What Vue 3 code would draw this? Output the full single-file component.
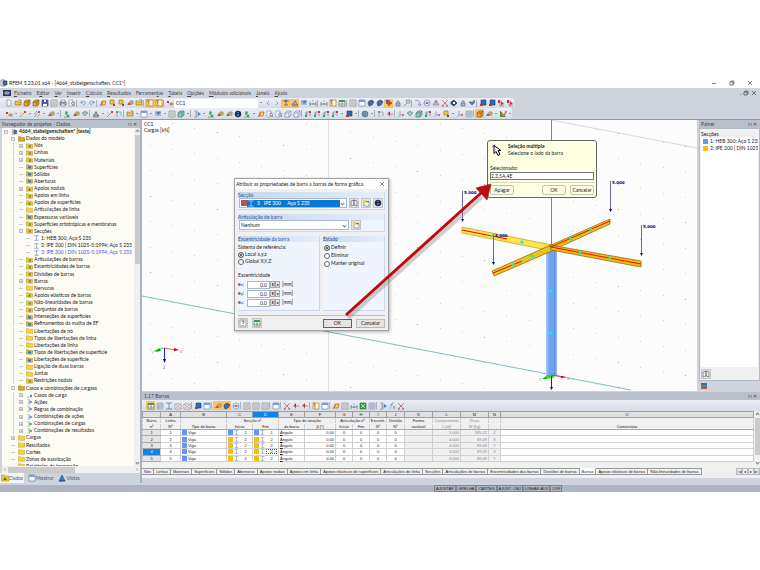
<script setup>
import { h, ref } from "vue";

const menu = [
  ["", "F", "icheiro"], ["E", "d", "itar"], ["", "V", "er"], ["", "I", "nserir"],
  ["", "C", "álculo"], ["", "R", "esultados"], ["Ferramen", "t", "as"], ["", "T", "abela"],
  ["", "O", "pções"], ["", "M", "ódulos adicionais"], ["", "J", "anela"], ["", "A", "juda"]
];

// every glyph is a list of [path, fill, stroke] on an 8x8 grid
const glyphs = {
  page: [["M2 1H5L6 2V7H2Z", "#fff", "#777"]],
  open: [["M1 2H3L4 3H7V6H1Z", "#f4c53c", "#8c6d1a"], ["M4 1H7V3", "none", "#555"]],
  cubeY: [["M1 3L3 1H7V5L5 7H1Z", "#eba52a", "#7b541c"], ["M1 3H5V7M5 3L7 1", "none", "#604622"]],
  cubeG: [["M1 3L3 1H7V5L5 7H1Z", "#8fcbb0", "#3b6b68"], ["M1 3H5V7M5 3L7 1", "none", "#45746a"]],
  wire: [["M1 3L3 1H7V5L5 7H1Z", "#eef3fb", "#6677aa"], ["M1 3H5V7M5 3L7 1", "none", "#6677aa"]],
  disk: [["M1 1H7V7H1Z", "#4861c0", "#26347c"], ["M3 1H5V3H3ZM2 5H6V7H2Z", "#fff", "none"]],
  sheet: [["M1 1H7V7H1Z", "#e8e8e8", "#777"], ["M2 3H6M2 5H6", "none", "#777"]],
  print: [["M1 3H7V6H1Z", "#aab2c2", "#555"], ["M2 1H6V3H2ZM2 5H6V7H2Z", "#fff", "#777"]],
  find: [["M1 1H5V7H1Z", "#fff", "#7b88a0"], ["M5 3A1.5 1.5 0 1 0 5 6A1.5 1.5 0 1 0 5 3M6 6L7 7", "#cfe0f8", "#3c568e"]],
  undo: [["M2 2V4H4M2 4C4 1 7 2 6 5L4 6", "none", "#5474b8"]],
  redo: [["M6 2V4H4M6 4C4 1 1 2 2 5L4 6", "none", "#5474b8"]],
  plane: [["M2 6L3 2H7L6 6Z", "#f5d864", "#b23d32"], ["M1 7L4 3", "none", "#c4302a"]],
  nodeY: [["M2 1H6V5H2Z", "#f2cf2c", "#8a6d1c"], ["M5 5H7V7H5Z", "#b2342b", "none"]],
  nodeR: [["M1 2H3V4H1Z", "#d22e25", "none"], ["M4 4H7V6H4Z", "#e6b82c", "#8c7744"]],
  line: [["M1 7L6 2", "none", "#4c9a3c"], ["M5 1H7V3H5Z", "#dc4036", "none"], ["M1 3H3", "none", "#e1b530"]],
  lines: [["M1 7L6 1M1 4L4 1M4 7L7 4", "none", "#59896a"], ["M5 1H7V3H5Z", "#dc5040", "none"]],
  beam: [["M1 2H7M4 2V6M2 6H6", "none", "#345295"], ["M3 1H5V3H3Z", "#4468a8", "none"]],
  support: [["M4 2L7 6H1Z", "#9daec8", "#425374"], ["M1 7H7M4 1V3", "none", "#c24436"]],
  supG: [["M3 1V5H6M1 7H7", "none", "#3b6b92"], ["M2 3L4 1L5 3L3 5ZM4 5H6V7H4Z", "#39a84b", "none"]],
  supR: [["M1 6L3 3L5 6Z", "#e04a3c", "none"], ["M4 2H7V5H4Z", "#f2c52e", "#546a94"]],
  axes: [["M3 1V5H7M3 5L1 7", "none", "#6580b6"], ["M5 4H7V6H5Z", "#de6c5f", "none"]],
  frame: [["M2 7V2H6V6", "none", "#738299"], ["M1 1H3V3H1Z", "#51a965", "none"]],
  frameR: [["M2 7V2H6V6M2 4H4", "none", "#456c9a"], ["M5 1H7V3H5Z", "#da342c", "none"], ["M1 5H3V7H1Z", "#28a743", "none"]],
  win: [["M1 1H7V7H1Z", "#fff", "#5e76a8"], ["M1 1H7V3H1Z", "#7c9bd4", "none"]],
  winY: [["M1 1H7V7H1Z", "#fff7da", "#977126"], ["M1 1H3V7", "#db9f3c", "#977126"]],
  grid: [["M1 1H7V7H1Z", "#e6ecf6", "#7f8dab"], ["M3 1V7M5 1V7M1 3H7M1 5H7", "none", "#7f8dab"]],
  gridG: [["M1 2H7V7H1Z", "#fff", "#48664e"], ["M1 1H7V3H1Z", "#3f9a55", "none"], ["M4 3V7M1 5H7", "none", "#48664e"]],
  gridR: [["M1 2H7V7H1Z", "#fff", "#777"], ["M2 3L6 6M6 3L2 6", "none", "#cf4b46"]],
  left: [["M5 2L3 4L5 6", "none", "#4a7ad0"]],
  right: [["M3 2L5 4L3 6", "none", "#4a7ad0"]],
  load: [["M1 2H7M2 2V6M4 2V6M6 2V6", "none", "#34559d"], ["M3 3L5 1L6 3L4 5Z", "#3e79c8", "none"]],
  blob: [["M2 2L5 1L7 3L5 6L2 7L1 4Z", "#416ba9", "#29417c"], ["M4 2L6 1L5 4Z", "#c53935", "none"]],
  star: [["M4 1L5 3L7 4L5 5L4 7L3 5L1 4L3 3Z", "#db382e", "#753d35"], ["M1 1H3V3H1Z", "#34589f", "none"]],
  measure: [["M1 5H7M1 3V7M7 3V7M4 4V6", "none", "#4c5b7a"], ["M3 1L5 3", "none", "#7390bf"]],
  lock: [["M2 4H6V7H2Z", "#a9b2c8", "#56637d"], ["M3 4V2H5V4", "none", "#56637d"]],
  wand: [["M1 7L4 4", "none", "#57617e"], ["M3 1H7V4H4Z", "#c8d3e8", "#65779b"]],
  turn: [["M1 2C4 0 6 3 6 6M4 5L6 7L7 5", "none", "#68728c"]],
  orbit: [["M4 1A3 3 0 1 0 4 7A3 3 0 1 0 4 1M1 4H7", "none", "#5987c6"], ["M3 3H5V5H3Z", "#d0625c", "none"]],
  gear: [["M4 1A3 3 0 1 0 4 7A3 3 0 1 0 4 1", "#8091ac", "#4d6080"], ["M3 3H5V5H3Z", "#4a9a88", "none"]],
  cone: [["M4 1L7 6H1Z", "#cfcbd4", "#77656c"], ["M4 2V5", "none", "#c7342c"]],
  cross: [["M1 1L7 7M7 1L1 7", "none", "#d02d2a"], ["M1 7H3M5 7H7", "none", "#333"]],
  eye: [["M1 3L4 1L7 4L4 7L1 5Z", "#31497e", "#1c2849"], ["M3 3H5V5H3Z", "#fff", "none"]],
  check: [["M1 3H7L4 6Z", "#587fc2", "#3a5c9a"], ["M5 1H7V3H5Z", "#78aa4c", "none"]],
  mark: [["M2 1H7V6H2Z", "#276cb2", "#174378"], ["M1 5H4V7H1Z", "#c62f33", "none"]],
  markR: [["M3 1V7H7", "none", "#a24545"], ["M4 2L7 5L4 6ZM1 1H3V4H1Z", "#c82936", "none"]],
  fan: [["M1 1L7 7H1Z", "#2aa348", "none"], ["M1 1L5 5L7 1L7 3L4 7Z", "#e6c722", "#c92d25"]],
  diamond: [["M1 3L4 1L7 3L4 6Z", "#72c9ae", "#5e88b4"], ["M3 3H5V5H3Z", "#f0bc38", "none"]],
  minusR: [["M1 4H7", "none", "#bd3d36"], ["M2 3L4 1V7Z", "#a93731", "none"]],
  fx: [["M2 7L4 1H6M2 3H5M5 4L7 7M7 4L5 7", "none", "#7081a4"]],
  excel: [["M1 1H7V7H1Z", "#37a348", "#186b2c"], ["M2 2L6 6M6 2L2 6", "none", "#fff"]],
  book: [["M1 2L4 1V6L1 7ZM4 1L7 2V7L4 6Z", "#eee", "#555"]],
  newWin: [["M2 3H7V7H2Z", "#fff", "#5d6f80"], ["M1 1H4V4H1Z", "#f5d22e", "none"], ["M4 2H7V3H4Z", "#39a452", "none"]],
  info: [["M4 1A3 3 0 1 0 4 7A3 3 0 1 0 4 1", "#123363", "#102040"], ["M4 2V3M4 4V6", "none", "#fff"]],
  help: [["M1 1H7V7H1Z", "#fff", "#777"], ["M3 3V2H5V4H4V5M4 6V7", "none", "#345"]],
  root: [["M1 1H5V7H1Z", "#fff", "#456"], ["M3 2H7V6H3Z", "#466ca8", "#234"]],
  logo: [["M0 1H8V7H0Z", "#24346c", "none"], ["M1 4H7M3 2V6M5 2V6", "none", "#fff"]],
  case: [["M1 7H4M6 3V6", "none", "#333"], ["M5 4H7V7H5Z", "#3269c4", "none"]],
  comb: [["M1 1H4V7H1M2 3H4M2 5H4", "none", "#777"], ["M5 2L8 4L5 6Z", "#3d80e0", "none"]],
  combG: [["M1 1H4V7H1M2 3H4M2 5H4", "none", "#777"], ["M5 2L8 4L5 6Z", "#2f9a44", "none"]],
  ibeam: [["M1 1H7M1 7H7M4 1V7", "none", "#38599b"]],
  ibeamW: [["M1 1H7M1 7H7M4 1V7", "none", "#fff"]],
  folder: [["M0 1H3L4 2H8V7H0Z", "#f7d53a", "#b9921c"]],
  folderX: [["M0 1H3L4 2H8V7H0Z", "#efc92e", "#a98618"], ["M3 3H6V6H3Z", "#8c8440", "none"]],
  folderB: [["M0 1H3L4 2H8V7H0Z", "#d9bb3a", "#8d8138"], ["M2 3H6V6H2Z", "#3f78b4", "none"]],
  folderG: [["M0 1H3L4 2H8V7H0Z", "#efc92e", "#a98618"], ["M4 3L6 6H2Z", "#21883c", "none"]],
  folderO: [["M0 1H3L4 2H8V7H0Z", "#d4af16", "#8a7110"]],
  views: [["M1 7L4 1L7 7Z", "#3b7bd0", "#27447c"], ["M1 7H7", "none", "#333"]],
  levels: [["M1 1H7V3H1Z", "#5464b0", "none"], ["M1 3H7V5H1Z", "#3e9d54", "none"], ["M1 5H7V7H1Z", "#cc4a4e", "none"]],
  close: [["M2 2L6 6M6 2L2 6", "none", "#333"]],
  restore: [["M2 3H5V6H2ZM3 3V2H6V5H5", "none", "#333"]],
  minimize: [["M2 4.5H6", "none", "#333"]]
};

const Ico = (props) =>
  h("svg", { class: "ico", viewBox: "0 0 8 8" }, glyphs[props.name].map((p) => h("path", { d: p[0], fill: p[1], stroke: p[2] })));
Ico.props = ["name"];

// "|" separator, "v" drop-down arrow, trailing * pressed
const ToolRow = (props) =>
  props.items.split(" ").map((t) => {
    if (t === "|") return h("i", { class: "sep" });
    if (t === "v") return h("i", { class: "drop" });
    const name = t.replace("*", "");
    return h("button", { type: "button", class: ["tool", { on: t !== name }], "aria-label": name }, [h(Ico, { name })]);
  });
ToolRow.props = ["items"];

const fileTools = "page open cubeY cubeY disk sheet print find | undo redo | plane nodeY nodeY supR open | winY* winY* | nodeR";
const viewTools = "v left right beam* support* load measure | measure winY gridG | sheet win blob blob star* lock wand | turn orbit cone cross eye lock check | mark mark markR markR";
const modelTools = "nodeR v line v lines v supR v | supG supR diamond | support v line frame | open v win v load v sheet cubeG v | comb v supG supR supR info supG v plane find find wire wire | frameR frameR frameR frameR v mark v | gear v | frame minusR | axes diamond cubeG frameR axes nodeY v axes grid | cubeY* supR v fan v";
const tableTools = "gridG* grid ibeam gridR gridR | mark win | supR* blob* orbit | sheet sheet sheet | win | cross minusR minusR | winY win | plane sheet measure excel grid | comb fx cross";

const tree = [
  [0, "root", "4664_stabeigenschaften* [teste]", "-"],
  [1, "folderO", "Dados do modelo", "-"],
  [2, "folderX", "Nós", "+"],
  [2, "folderX", "Linhas", "+"],
  [2, "folderX", "Materiais", "+"],
  [2, "folderB", "Superfícies"],
  [2, "folderB", "Sólidos"],
  [2, "folderB", "Aberturas"],
  [2, "folderG", "Apoios nodais", "+"],
  [2, "folderX", "Apoios em linha"],
  [2, "folderG", "Apoios de superfícies"],
  [2, "folder", "Articulações de linha"],
  [2, "folderB", "Espessuras variáveis"],
  [2, "folderX", "Superfícies ortotrópicas e membranas"],
  [2, "folderX", "Secções", "-"],
  [3, "ibeam", "1: HEB 300; Aço S 235"],
  [3, "ibeam", "2: IPE 200 | DIN 1025-5:1994; Aço S 235"],
  [3, "ibeam", "3: IPE 300 | DIN 1025-5:1994; Aço S 235"],
  [2, "folderX", "Articulações de barras"],
  [2, "folderX", "Excentricidades de barras"],
  [2, "folderX", "Divisões de barras"],
  [2, "folderX", "Barras", "+"],
  [2, "folder", "Nervuras"],
  [2, "folderG", "Apoios elásticos de barras"],
  [2, "folderX", "Não-linearidades de barras"],
  [2, "folderX", "Conjuntos de barras"],
  [2, "folderB", "Interseções de superfícies"],
  [2, "folderB", "Refinamentos da malha de EF"],
  [2, "folder", "Libertações de nó"],
  [2, "folder", "Tipos de libertações de linha"],
  [2, "folder", "Libertações de linha"],
  [2, "folderB", "Tipos de libertações de superfície"],
  [2, "folderB", "Libertações de superfície"],
  [2, "folder", "Ligação de duas barras"],
  [2, "folder", "Juntas"],
  [2, "folderX", "Restrições nodais"],
  [1, "folderO", "Casos e combinações de cargass", "-"],
  [2, "case", "Casos de carga", "+"],
  [2, "comb", "Ações", "+"],
  [2, "comb", "Regras de combinação", "+"],
  [2, "comb", "Combinações de ações", "+"],
  [2, "combG", "Combinações de cargas", "+"],
  [2, "combG", "Combinações de resultados", "+"],
  [1, "folder", "Cargas", "+"],
  [1, "folder", "Resultados"],
  [1, "folder", "Cortes"],
  [1, "folder", "Zonas de suavização"],
  [1, "folder", "Relatórios de impressão"]
];

// snap grid of the work plane
const dots = [];
for (let i = -18; i <= 6; i++) {
  for (let j = -12; j <= 12; j++) {
    const x = Math.round(551 + 22.3 * i);
    const y = Math.round(272 + 4.3 * i + 25.5 * j);
    if (i && y > 120 && y < 388) dots.push({ x, y, o: (i * i + j * j) % 3 ? 0.3 : 0.6 });
  }
}

const loads = [
  { x: 462, y: 190 }, { x: 493, y: 233 }, { x: 610, y: 180 }, { x: 641, y: 224 }
];
const marks = [
  [492, 235], [522, 241], [580, 252], [610, 257], [513, 264], [532, 255], [571, 238], [591, 229], [551, 290], [551, 332]
];

const reference = ref("local");
const state = ref("definir");
const selected = ref("2,3,5A,4E");
const offsets = ref([
  { axis: "x", value: "0.0" },
  { axis: "y", value: "0.0" },
  { axis: "z", value: "0.0" }
]);

const letters = ["A", "B", "C", "D", "E", "F", "G", "H", "I", "J", "K", "L", "M", "N", "O"];
const bars = [
  { n: 1, sec: 1, len: "5.000", weight: "585.22", dir: "Z" },
  { n: 2, sec: 2, len: "4.000", weight: "89.49", dir: "X" },
  { n: 3, sec: 2, len: "4.000", weight: "89.49", dir: "Y" },
  { n: 4, sec: 2, len: "4.000", weight: "89.49", dir: "X" },
  { n: 5, sec: 2, len: "4.000", weight: "89.49", dir: "Y" }
];
const sheets = [
  "Nós", "Linhas", "Materiais", "Superfícies", "Sólidos", "Aberturas", "Apoios nodais", "Apoios em linha",
  "Apoios elásticos de superfícies", "Articulações de linha", "Secções", "Articulações de barras",
  "Excentricidades das barras", "Divisões de barras", "Barras", "Apoios elásticos de barras", "Não-linearidades de barras"
];
const snaps = ["AJUSTAR", "GRELHA", "CARTES", "AJUST. OBJ", "LINHAS AUX", "DXF"];
</script>

<template>
  <div class="app">
    <header class="title">
      <Ico name="root" />
      <span>RFEM 5.23.01 x64 - [4664_stabeigenschaften, CC1*]</span>
      <div class="win-btns">
        <button type="button" aria-label="Minimizar"><Ico name="minimize" /></button>
        <button type="button" aria-label="Restaurar"><Ico name="restore" /></button>
        <button type="button" aria-label="Fechar"><Ico name="close" /></button>
      </div>
    </header>
    <nav class="menu">
      <Ico name="logo" />
      <a v-for="m in menu" :key="m[1] + m[2]" href="#">{{ m[0] }}<u>{{ m[1] }}</u>{{ m[2] }}</a>
      <div class="mdi"><span>_</span><Ico name="restore" /><Ico name="close" /></div>
    </nav>

    <div class="bars">
      <div class="tools">
        <ToolRow :items="fileTools" />
        <select class="case" aria-label="Caso de carga"><option>CC1</option></select>
        <ToolRow :items="viewTools" />
      </div>
      <div class="tools">
        <ToolRow :items="modelTools" />
      </div>
    </div>

    <div class="work">
      <aside class="navigator">
        <div class="dock-head"><span>Navegador de projetos - Dados</span><span class="pin">⊓ ✕</span></div>
        <div class="tree-box">
          <div class="tree-view">
            <ul class="tree">
              <li v-for="(n, i) in tree" :key="i" :class="['lv' + n[0], { blue: i === 17, root: i === 0 }]">
                <i class="exp">{{ n[3] }}</i>
                <Ico :name="n[1]" />
                <span>{{ n[2] }}</span>
              </li>
            </ul>
          </div>
          <div class="vscroll"><i class="up"></i><b></b><i class="down"></i></div>
        </div>
        <div class="hscroll"><i>‹</i><b></b><i>›</i></div>
        <div class="nav-tabs">
          <button type="button" class="active"><Ico name="folderG" />Dados</button>
          <button type="button"><Ico name="win" />Mostrar</button>
          <button type="button"><Ico name="views" />Vistas</button>
        </div>
      </aside>

      <div class="right">
        <div class="upper">
          <main class="canvas">
            <svg class="scene" viewBox="142 119 555 271" preserveAspectRatio="xMinYMin slice">
              <defs>
                <linearGradient id="col" x1="0" x2="1">
                  <stop offset="0" stop-color="#a9c9f8" /><stop offset=".3" stop-color="#6fa4f2" />
                  <stop offset=".7" stop-color="#70a2ef" /><stop offset=".75" stop-color="#5d8ee2" /><stop offset="1" stop-color="#9cbdf4" />
                </linearGradient>
              </defs>
              <rect v-for="(d, i) in dots" :key="i" :x="d.x" :y="d.y" width="1" height="1" fill="#666" :opacity="d.o" />
              <path d="M328.500 119V390" stroke="#e2e2e2" />
              <path d="M551 119L697 147" stroke="#ccc" stroke-width=".7" />
              <path d="M142 295L631 389" stroke="#4ba3a3" stroke-width=".7" />
              <path d="M551.500 119V246" stroke="#48a097" />
              <path d="M546 248H557V375H546Z" fill="url(#col)" />
              <path d="M462 226L552 244V250L462 232Z" fill="#fbe44c" stroke="#c09a10" stroke-width=".7" />
              <path d="M462 229L507 238" stroke="#f00" />
              <path d="M492 270L551 244L554 249L494 275Z" fill="#edc41c" stroke="#8a7010" stroke-width=".8" />
              <path d="M493 272L522 260" stroke="#f00" />
              <path d="M549 245L610 218V223L553 249Z" fill="#edc41c" stroke="#8a7010" stroke-width=".8" />
              <path d="M550 244L641 260V266L551 249Z" fill="#f2bd10" stroke="#8a7010" stroke-width=".8" />
              <path d="M551 246L610 220M551 246L641 263" stroke="#f00" />
              <circle v-for="m in marks" :key="m.join()" :cx="m[0]" :cy="m[1]" r="1.500" fill="#00f0f0" />
              <g v-for="l in loads" :key="l.x">
                <path :d="`M${l.x}.500 ${l.y}v30`" stroke="#6868a8" />
                <path :d="`M${l.x - 1} ${l.y + 28}h3l-1.500 3z`" fill="#000090" />
                <text :x="l.x + 2" :y="l.y + 3" class="load">5.000</text>
              </g>
              <path d="M164 347L154 350" stroke="#39e939" /><path d="M159 347L155 351L161 350Z" fill="#109e10" />
              <path d="M164 347L176 349" stroke="#f55" /><path d="M174 347L179 349L174 350Z" fill="#c00" />
              <path d="M164.500 347V360" stroke="#22f" /><path d="M163 358H166L164.500 362Z" fill="#007" />
              <text x="180" y="352" class="axis x">X</text><text x="151" y="353" class="axis y">Y</text><text x="163" y="368" class="axis z">Z</text>
              <path d="M547 374H556L553 377L545 378Z" fill="#1ee31e" /><path d="M542 378L547 375L546 378Z" fill="#0a0" />
              <path d="M551 374L564 376" stroke="#e33" /><path d="M561 375L566 376L561 377Z" fill="#c00" />
              <path d="M551.500 375V388" stroke="#228" /><path d="M550 386H553L551.500 389Z" fill="#007" />
              <text x="567" y="379" class="axis x">X</text><text x="539" y="380" class="axis y">Y</text>
            </svg>
            <div class="caption">CC1<br />Cargas [kN]</div>

            <section class="dialog assign">
              <div class="dlg-title"><span>Atribuir as propriedades de barra a barras de forma gráfica</span><button type="button" aria-label="Fechar"><Ico name="close" /></button></div>
              <fieldset>
                <legend>Secção</legend>
                <div class="row">
                  <div class="combo hot">
                    <i class="red"></i><Ico name="ibeamW" />
                    <select aria-label="Secção"><option>3 &nbsp; IPE 300 &nbsp; &nbsp; Aço S 235</option></select><i class="chev"></i>
                  </div>
                  <button v-for="b in ['book', 'newWin', 'info']" :key="b" type="button" class="sq" :aria-label="b"><Ico :name="b" /></button>
                </div>
              </fieldset>
              <fieldset>
                <legend>Articulação de barra</legend>
                <div class="row">
                  <div class="combo"><select aria-label="Articulação de barra"><option>Nenhum</option></select><i class="chev"></i></div>
                  <button type="button" class="sq" aria-label="Nova articulação"><Ico name="newWin" /></button>
                </div>
              </fieldset>
              <div class="pair">
                <fieldset class="ecc">
                  <legend>Excentricidade da barra</legend>
                  <p>Sistema de referência:</p>
                  <label><input v-model="reference" type="radio" value="local" />Local x,y,z</label>
                  <label><input v-model="reference" type="radio" value="global" />Global X,Y,Z</label>
                  <p class="sub">Excentricidade</p>
                  <div v-for="o in offsets" :key="o.axis" class="offset">
                    <label :for="'e' + o.axis">e<sub>{{ o.axis }}</sub>:</label>
                    <input :id="'e' + o.axis" v-model="o.value" type="text" />
                    <button type="button" class="spin" aria-label="Alterar">⬍</button><button type="button" class="spin" aria-label="Mais">▸</button>
                    <span>[mm]</span>
                  </div>
                </fieldset>
                <fieldset class="state">
                  <legend>Estado</legend>
                  <label><input v-model="state" type="radio" value="definir" />Definir</label>
                  <label><input v-model="state" type="radio" value="eliminar" />Eliminar</label>
                  <label><input v-model="state" type="radio" value="manter" />Manter original</label>
                </fieldset>
              </div>
              <footer>
                <button v-for="b in ['help', 'gridG']" :key="b" type="button" class="sq" :aria-label="b"><Ico :name="b" /></button>
                <button type="button" class="btn ok">OK</button>
                <button type="button" class="btn">Cancelar</button>
              </footer>
            </section>

            <section class="dialog multi">
              <div class="multi-head">
                <svg viewBox="0 0 12 12"><path d="M0 1L3 4M3 1L0 4" stroke="#c050c0" /><path d="M2 2V10L4 8L6 12L8 11L6 7H9Z" fill="#fff" stroke="#000" /></svg>
                <div><strong>Seleção múltipla</strong><br />Selecione o lado da barra</div>
              </div>
              <label for="sel">Selecionado:</label>
              <input id="sel" v-model="selected" type="text" />
              <div class="multi-btns">
                <button type="button">Apagar</button><button type="button" class="push">OK</button><button type="button">Cancelar</button>
              </div>
            </section>

            <svg class="scene over" viewBox="142 119 555 271" preserveAspectRatio="xMinYMin slice">
              <path d="M348 317L482 196" stroke="#777" stroke-width="4" opacity=".35" />
              <path d="M346 314L481 192" stroke="#c00c10" stroke-width="3" />
              <path d="M476 187L491 183L487 199Z" fill="#c00c10" stroke="#8d1014" stroke-width=".6" />
            </svg>
          </main>

          <aside class="panel">
            <div class="dock-head"><span>Painel</span><span class="pin">⊓ ✕</span></div>
            <div class="panel-body">
              <span class="panel-title">Secções</span>
              <ul>
                <li><i class="sw-blue"></i>1: HEB 300; Aço S 235</li>
                <li><i class="sw-gold"></i>2: IPE 200 | DIN 1025-5</li>
              </ul>
              <div class="panel-foot"><button type="button" class="sq" aria-label="Opções"><Ico name="book" /></button></div>
            </div>
            <div class="panel-tab"><Ico name="levels" /></div>
          </aside>
        </div>

        <section class="sheet">
          <div class="dock-head"><span>1.17 Barras</span><span class="pin">⊓ ✕</span></div>
          <div class="tools table-tools">
            <ToolRow :items="tableTools" />
          </div>
          <div class="grid-box">
            <table>
              <colgroup><col class="w18" /><col class="w20" /><col class="w46" /><col class="w26" /><col class="w26" /><col class="w26" /><col class="w31" /><col class="w17" /><col class="w17" /><col class="w17" /><col class="w18" /><col class="w28" /><col class="w28" /><col class="w28" /><col class="w12" /><col /></colgroup>
              <thead>
                <tr class="letters"><th></th><th v-for="l in letters" :key="l" :class="{ cur: l === 'D' }">{{ l }}</th></tr>
                <tr><th>Barra</th><th>Linha</th><th></th><th colspan="2">Secção nº</th><th colspan="2">Tipo de rotação</th><th colspan="2">Articulação nº</th><th>Excentr.</th><th>Divisão</th><th>Forma</th><th class="dim">Comprimento</th><th class="dim">Peso</th><th></th><th></th></tr>
                <tr class="low"><th>nº</th><th>Nº</th><th>Tipo de barra</th><th>Início</th><th>Fim</th><th>da barra</th><th>β [°]</th><th>Início</th><th>Fim</th><th>Nº</th><th>Nº</th><th>variável</th><th class="dim">L [m]</th><th class="dim">W [kg]</th><th></th><th>Comentário</th></tr>
              </thead>
              <tbody>
                <tr v-for="b in bars" :key="b.n">
                  <th :class="{ cur: b.n === 4 }">{{ b.n }}</th>
                  <td class="mid">{{ b.n }}</td>
                  <td><div class="cell"><i class="sw-blue"></i>Viga</div></td>
                  <td v-for="s in 2" :key="s">
                    <div class="cell"><i :class="b.sec === 1 ? 'sw-blue' : 'sw-gold'"></i><Ico name="ibeam" /><span :class="{ focus: b.n === 4 && s === 2 }">{{ b.sec }}</span></div>
                  </td>
                  <td><u>Â</u>ngulo</td>
                  <td class="num">0.00</td>
                  <td class="mid">0</td><td class="mid">0</td><td class="mid">0</td><td class="mid">0</td>
                  <td class="off"></td><td class="off num">{{ b.len }}</td><td class="off num">{{ b.weight }}</td><td class="off mid">{{ b.dir }}</td><td></td>
                </tr>
              </tbody>
            </table>
            <div class="vscroll"><i class="up"></i><b></b><i class="down"></i></div>
          </div>
          <div class="sheet-tabs">
            <button v-for="s in sheets" :key="s" type="button" :class="{ active: s === 'Barras' }">{{ s }}</button>
            <span class="pager"><i>|◂</i><i>◂</i><i>▸</i><i>▸|</i></span>
          </div>
        </section>
      </div>
    </div>
    <footer class="status"><span v-for="s in snaps" :key="s">{{ s }}</span></footer>
  </div>
</template>

<style>
body {
  background: #fff;
}
.ico {
  width: 8px;
  height: 8px;
  flex: none;
  display: block;
  stroke-width: 0.6;
}
</style>
<style scoped>
* {
  box-sizing: border-box;
}
.app {
  margin-top: 78px;
  font: 5px/7px Lato, "Open Sans", sans-serif;
  color: #222;
  white-space: nowrap;
  overflow: hidden;
}
button,
input,
select,
.app :deep(.tool) {
  font: inherit;
  color: inherit;
  margin: 0;
  padding: 0;
  border: 0;
  border-radius: 0;
  background: none;
  appearance: none;
  outline: none;
  line-height: 7px;
}
i {
  font-style: normal;
}
ul {
  list-style: none;
  margin: 0;
  padding: 0;
}
a {
  color: inherit;
  text-decoration: none;
}
.title {
  display: flex;
  align-items: center;
  height: 10px;
  background: #fff;
  gap: 1px;
}
.win-btns {
  display: flex;
  gap: 10px;
  margin: 0 6px 0 auto;
}
.menu {
  display: flex;
  align-items: center;
  gap: 5px;
  height: 10px;
  padding: 0 2px 0 3px;
  background: #ced3dd;
  color: #444;
}
.menu > .ico {
  margin-right: -2px;
}
.mdi {
  display: flex;
  margin-left: auto;
}
.bars {
  background: #ced3dd;
}
.tools {
  display: flex;
  align-items: center;
  width: max-content;
  height: 11px;
  padding-left: 4px;
  background: linear-gradient(#eceff5, #d6dbe5);
  border-radius: 0 2px 2px 0;
}
.tools:first-child {
  height: 10px;
}
.tools :deep(.tool) {
  width: 9px;
  height: 9px;
  flex: none;
  display: flex;
  align-items: center;
  justify-content: center;
}
.tools :deep(.on) {
  background: #fcc266;
}
.tools :deep(.sep) {
  width: 1px;
  height: 7px;
  margin-right: 1px;
  background: #aab0bd;
  flex: none;
}
.tools :deep(.drop),
.chev,
.vscroll i {
  width: 5px;
  flex: none;
  display: flex;
  justify-content: center;
}
.tools :deep(.drop)::after {
  content: "";
  border: 1px solid transparent;
  border-top-color: #444;
}
.case {
  width: 84px;
  height: 9px;
  padding-left: 2px;
  background: #fff;
}
.work {
  display: flex;
  background: #ced3dd;
  border-top: 1px solid #8f98a8;
}
.dock-head {
  display: flex;
  justify-content: space-between;
  height: 8px;
  line-height: 8px;
  padding: 0 3px 0 2px;
  background: #b9c0cc;
  color: #444;
}
.navigator {
  width: 140px;
  flex: none;
  display: flex;
  flex-direction: column;
}
.tree-box {
  display: flex;
  height: 338px;
  margin-left: 2px;
  background: #fcfcf4;
}
.tree-view {
  flex: 1;
  overflow: hidden;
}
.tree {
  display: grid;
  grid-auto-rows: 7px;
  align-content: space-between;
  height: 342px;
}
.tree li {
  display: flex;
  align-items: center;
  gap: 1px;
}
.tree .ico {
  width: 7px;
  height: 6px;
}
.lv0 {
  padding-left: 2px;
}
.lv1 {
  padding-left: 9px;
}
.lv2 {
  padding-left: 17px;
}
.lv3 {
  padding-left: 24px;
}
.lv2,
.lv3 {
  background: linear-gradient(#d4d4cc, #d4d4cc) 11px 0 / 1px 100% no-repeat;
}
.tree .root {
  font-weight: bold;
}
.tree .blue {
  color: #5555ee;
}
.exp {
  width: 4px;
  height: 4px;
  margin-right: 2px;
  border: 1px solid #b9bfcc;
  color: #447;
  line-height: 2px;
  text-align: center;
  font-size: 4px;
}
.exp:empty {
  height: 1px;
  border-width: 1px 0 0;
  border-color: #ccc;
}
.vscroll {
  width: 6px;
  flex: none;
  display: flex;
  flex-direction: column;
  align-items: center;
  background: #f0f0f0;
}
.vscroll i {
  height: 7px;
  align-items: center;
}
.vscroll b {
  width: 5px;
  height: 129px;
  margin-bottom: auto;
  background: #cbcbcb;
}
.up::after,
.down::after,
.chev::after {
  content: "";
  width: 2px;
  height: 2px;
  border: solid #777;
  border-width: 0 1px 1px 0;
  transform: rotate(45deg);
}
.up::after {
  transform: rotate(225deg);
}
.hscroll {
  display: flex;
  align-items: center;
  height: 7px;
  margin-left: 2px;
  background: #f0f0f0;
}
.hscroll i {
  width: 6px;
  text-align: center;
}
.hscroll b {
  width: 67px;
  height: 6px;
  margin-right: auto;
  background: #cbcbcb;
}
.nav-tabs {
  display: flex;
  height: 10px;
  gap: 3px;
  color: #556;
}
.nav-tabs button {
  display: flex;
  align-items: center;
  padding: 0 1px;
}
.nav-tabs .active {
  background: #f4f5f8;
}
.right {
  flex: 1;
  min-width: 0;
  display: flex;
  flex-direction: column;
  border-left: 2px solid #aab2c0;
}
.upper {
  display: flex;
  height: 271px;
}
.canvas {
  position: relative;
  flex: 1;
  min-width: 0;
  background: #fcfcfc;
  overflow: hidden;
}
.scene {
  display: block;
  width: 100%;
  height: 100%;
  fill: none;
}
.over {
  position: absolute;
  inset: 0;
  pointer-events: none;
}
.load {
  font: bold 4px "DejaVu Sans", sans-serif;
  fill: #00008b;
}
.axis {
  font-size: 4px;
}
.axis.x {
  fill: #f06060;
}
.axis.y {
  fill: #60d060;
}
.axis.z {
  fill: #5050f0;
}
.caption {
  position: absolute;
  left: 2px;
  top: 1px;
  line-height: 6px;
}
.dialog {
  position: absolute;
}
.assign {
  left: 92px;
  top: 58px;
  width: 155px;
  padding: 0 3px 2px;
  background: #f0f0f0;
  border: 1px solid #a2a2a2;
  box-shadow: 1px 1px 3px rgba(0, 0, 0, 0.3);
}
.dlg-title {
  display: flex;
  align-items: center;
  justify-content: space-between;
  height: 10px;
  margin: 0 -3px 3px;
  padding: 0 2px 0 1px;
  background: #fff;
}
fieldset {
  margin: 0 0 4px;
  padding: 0 0 1px;
  min-width: 0;
  border: 0;
  background: #f0f4fc;
  border-bottom: 1px solid #ccd8ee;
  border-right: 1px solid #ccd8ee;
}
legend {
  float: left;
  width: 100%;
  height: 6px;
  line-height: 6px;
  padding: 0;
  background: linear-gradient(90deg, #c6d8ee, #e6eefa);
  color: #2e5599;
}
fieldset > * {
  clear: both;
}
.row {
  display: flex;
  align-items: center;
  gap: 2px;
  padding: 0 1px;
}
.combo {
  display: flex;
  align-items: center;
  width: 110px;
  height: 10px;
  padding: 1px;
  background: #fff;
  border: 1px solid #a8b8d4;
}
.combo select {
  flex: 1;
}
.hot select {
  background: #0878d8;
  color: #fff;
  padding-left: 2px;
}
.hot .ico {
  background: #0878d8;
  height: 7px;
}
.red {
  width: 6px;
  height: 6px;
  background: #a85a5a;
}
.sq {
  width: 10px;
  height: 10px;
  flex: none;
  display: grid;
  place-items: center;
  background: #e4e4e4;
  border: 1px solid #c4c4c4;
}
.pair {
  display: flex;
  gap: 3px;
}
.pair fieldset {
  height: 75px;
}
.ecc {
  width: 82px;
}
.state {
  flex: 1;
}
.pair p {
  margin: 0;
  padding-top: 2px;
}
.pair label {
  display: flex;
  align-items: center;
  gap: 1px;
  height: 7px;
}
.state legend + label {
  margin-top: 8px;
}
.state label {
  margin-bottom: 1px;
  padding-left: 1px;
}
.pair input[type="radio"] {
  width: 6px;
  height: 6px;
  border: 1px solid #666;
  border-radius: 50%;
  background: #fff;
}
.pair input[type="radio"]:checked {
  background: #333;
  box-shadow: inset 0 0 0 1px #fff;
}
.pair .sub {
  padding: 7px 0 1px;
}
.offset {
  display: flex;
  align-items: center;
  height: 9px;
}
.offset label {
  width: 9px;
  gap: 0;
}
sub {
  font-size: 4px;
  line-height: 4px;
}
.offset input {
  width: 23px;
  height: 8px;
  text-align: right;
  padding-right: 2px;
  background: #fff;
  border: 1px solid #a8b8d4;
}
.spin {
  width: 5px;
  height: 7px;
  font-size: 4px;
  background: #e2e2e2;
  border: 1px solid #aaa;
  line-height: 4px;
}
.offset span {
  padding-left: 2px;
}
.assign footer {
  display: flex;
  align-items: center;
  gap: 4px;
  padding-top: 2px;
  border-top: 1px solid #bbb;
}
.btn {
  width: 29px;
  height: 9px;
  background: #e4e4e4;
  border: 1px solid #b8b8b8;
}
.ok {
  margin-left: auto;
  border-color: #0878d8;
}
.multi {
  left: 345px;
  top: 20px;
  width: 110px;
  padding: 2px;
  background: #ffffe1;
  border: 1px solid #666;
  border-radius: 3px;
}
.multi-head {
  display: flex;
  gap: 4px;
  height: 22px;
  padding-left: 2px;
}
.multi-head svg {
  width: 12px;
  height: 13px;
}
.multi label {
  display: block;
  height: 7px;
}
.multi input {
  display: block;
  width: 100%;
  height: 8px;
  border: 1px solid #777;
  background: #fff;
}
.multi-btns {
  display: flex;
  gap: 4px;
  margin-top: 2px;
  padding-top: 2px;
  border-top: 1px solid #d8d8c0;
}
.multi-btns button {
  width: 24px;
  height: 10px;
  background: #fcfce6;
  border: 1px solid #c4c4b0;
  border-radius: 2px;
}
.multi-btns .push {
  margin-left: auto;
}
.panel {
  width: 63px;
  flex: none;
  display: flex;
  flex-direction: column;
  padding-left: 2px;
}
.panel-body {
  flex: 1;
  display: flex;
  flex-direction: column;
  padding: 1px;
  background: #f0f0f0;
  border: 1px solid #b4bac6;
}
.panel ul {
  flex: 1;
  background: #fff;
  overflow: hidden;
}
.panel li {
  display: flex;
  align-items: center;
  gap: 2px;
  padding-left: 2px;
}
.panel-title {
  height: 8px;
  line-height: 8px;
}
.panel-foot {
  padding-top: 2px;
}
.panel-tab {
  height: 10px;
  padding: 1px;
}
.sw-blue,
.sw-gold {
  width: 5px;
  height: 5px;
  flex: none;
  background: #6595fb;
}
.sw-gold {
  background: #f5c009;
}
.sheet {
  margin-top: 1px;
  background: #f0f0f0;
}
.table-tools {
  width: auto;
  border-radius: 0;
}
.grid-box,
.sheet-tabs,
.status {
  font-family: "Liberation Sans", Arial, sans-serif;
  font-size: 4px;
}
.grid-box {
  display: flex;
  height: 55px;
}
.grid-box .vscroll b {
  height: 37px;
}
table {
  flex: 1;
  width: 100%;
  height: 51px;
  table-layout: fixed;
  border-collapse: collapse;
}
th,
td {
  height: 6px;
  padding: 0 1px;
  line-height: 5px;
  border: 1px solid #d0d0d0;
}
th {
  font-weight: normal;
  padding: 0;
  background: #f0f0f0;
  border-bottom-color: #f0f0f0;
}
.letters th {
  background: #e0e0e0;
  border-color: #a0a0a0;
}
.low th,
tbody th {
  border-bottom-color: #a8a8a8;
}
tbody td {
  background: #fff;
}
tbody th {
  background: #e4e4e4;
}
.letters .cur,
tbody .cur {
  background: #1284e8;
  color: #fff;
}
.dim,
tbody .off {
  color: #888;
}
tbody .off {
  background: #f0f0f0;
}
.mid {
  text-align: center;
}
.num {
  text-align: right;
}
.cell {
  display: flex;
  align-items: center;
  gap: 1px;
  height: 5px;
}
.cell .ico {
  width: 5px;
  height: 5px;
}
.cell span {
  flex: 1;
  text-align: center;
}
.focus {
  outline: 1px dotted #555;
  outline-offset: -1px;
}
.w12 { width: 12px; }
.w17 { width: 17px; }
.w18 { width: 18px; }
.w20 { width: 20px; }
.w26 { width: 26px; }
.w28 { width: 28px; }
.w31 { width: 31px; }
.w46 { width: 46px; }
.sheet-tabs {
  display: flex;
  height: 12px;
  padding-top: 2px;
}
.sheet-tabs button {
  height: 7px;
  padding: 0 2px;
  line-height: 5px;
  border: 1px solid #999;
  border-left: 0;
}
.sheet-tabs .active {
  background: #fff;
  border-top-color: #fff;
}
.pager {
  display: flex;
  margin-left: auto;
}
.pager i {
  width: 6px;
  height: 7px;
  border: 1px solid #bbb;
  line-height: 5px;
  text-align: center;
}
.status {
  display: flex;
  justify-content: flex-end;
  align-items: center;
  height: 9px;
  padding-right: 26%;
  background: #aeb5c0;
  border-top: 2px solid #ced3dd;
}
.status span {
  padding: 0 1px;
  border: 1px solid #7d8592;
  line-height: 5px;
}
</style>
